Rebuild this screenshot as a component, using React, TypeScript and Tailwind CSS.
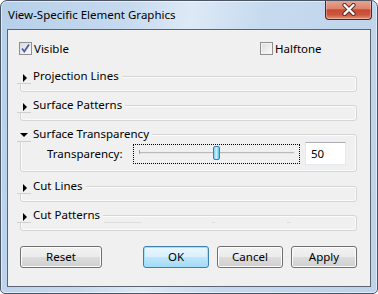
import React from "react";

function Header({ label, open }: { label: string; open?: boolean }) {
  return (
    <div className="absolute top-[-8px] left-[-3px] flex h-[16px] items-stretch bg-[#f0f0f0]">
      <div className="w-[14px] h-[12px] self-end border-b border-[#cfcfcf] flex items-center justify-center">
        {open ? (
          <div className="w-0 h-0 border-x-[4px] border-x-transparent border-t-[4px] border-t-black mt-[-1px]" />
        ) : (
          <div className="w-0 h-0 border-y-[4px] border-y-transparent border-l-[4px] border-l-black ml-[1px]" />
        )}
      </div>
      <span className="pl-[2px] pr-[3px] leading-[16px] text-black">{label}</span>
    </div>
  );
}

function Section({ label, className = "", children, open, boxH = "h-[16px]" }: { label: string; className?: string; children?: React.ReactNode; open?: boolean; boxH?: string }) {
  return (
    <div className={`relative ${className}`}>
      <div className={`${boxH} border border-[#d5d5d5] rounded-[3px] shadow-[inset_0_0_0_1px_#fbfbfb]`}>{children}</div>
      <Header label={label} open={open} />
    </div>
  );
}

function Btn({ label, primary, className = "" }: { label: string; primary?: boolean; className?: string }) {
  return (
    <div
      className={`h-[22px] flex items-center justify-center rounded-[3px] border text-black ${
        primary
          ? "border-[#3c7fb1] bg-[linear-gradient(#eaf6fd_0%,#d9f0fc_50%,#bee6fd_50%,#a7d9f5_100%)] shadow-[inset_0_0_0_1px_#9fe0fb]"
          : "border-[#707070] bg-[linear-gradient(#f2f2f2_0%,#ebebeb_50%,#dddddd_50%,#cfcfcf_100%)] shadow-[inset_0_0_0_1px_#fcfcfc]"
      } ${className}`}
    >
      {label}
    </div>
  );
}

export default function App() {
  return (
    <div className="w-[378px] h-[294px] font-['Noto_Sans',sans-serif] text-[11.5px]">
      <div className="w-[378px] h-[294px] flex flex-col rounded-t-[7px] rounded-b-[5px] border border-[#4b5563] bg-[linear-gradient(100deg,#b6cfe9_0%,#c6daef_30%,#dde9f6_45%,#c6daef_62%,#bcd3ea_100%)] shadow-[inset_0_0_0_1px_rgba(255,255,255,0.55)] overflow-hidden">
        <div className="h-[28px] flex items-start">
          <span className="pl-[7px] pt-[6px] leading-[16px] text-black">View-Specific Element Graphics</span>
          <div className="ml-auto mr-[5px] mt-[-1px] w-[47px] h-[20px] rounded-b-[4px] border border-[#5e2116] border-t-0 bg-[linear-gradient(#e9a694_0%,#dc846c_45%,#c84a33_52%,#cd563e_78%,#e4937a_100%)] shadow-[inset_0_0_0_1px_rgba(255,255,255,0.3)] flex items-center justify-center">
            <svg width="14" height="13" viewBox="0 0 14 13">
              <path d="M2.5 2 L11.5 11 M11.5 2 L2.5 11" stroke="#5a2a24" strokeWidth="4.2" strokeLinecap="round" />
              <path d="M2.5 2 L11.5 11 M11.5 2 L2.5 11" stroke="#ffffff" strokeWidth="2.4" strokeLinecap="round" />
            </svg>
          </div>
        </div>
        <div className="flex-1 mx-[6px] mb-[6px] border border-[#5b6470] bg-[#f0f0f0] flex flex-col">
          <div className="mt-[12px] h-[13px] flex items-center pl-[11px]">
            <div className="w-[241px] flex items-center">
              <div className="w-[13px] h-[13px] border border-[#8e8f8f] bg-[linear-gradient(135deg,#dcdcdc,#fafafa)] flex items-center justify-center">
                <svg width="11" height="11" viewBox="0 0 11 11">
                  <path d="M2 5.5 L4.3 8.5 L9 1.5" stroke="#4c61a0" strokeWidth="1.8" fill="none" />
                </svg>
              </div>
              <span className="ml-[2px] leading-[16px]">Visible</span>
            </div>
            <div className="flex items-center">
              <div className="w-[13px] h-[13px] border border-[#8e8f8f] bg-[linear-gradient(135deg,#dcdcdc,#fafafa)] shadow-[inset_0_0_0_1px_#f4f4f4]" />
              <span className="ml-[2px] leading-[16px]">Halftone</span>
            </div>
          </div>
          <div className="pl-[12px] pr-[13px] flex flex-col">
            <Section label="Projection Lines" className="mt-[21px]" />
            <Section label="Surface Patterns" className="mt-[13px]" />
            <Section label="Surface Transparency" className="mt-[13px]" open boxH="h-[38px]">
              <div className="pl-[26px] pt-[7px] flex items-center">
                <span className="w-[86px] leading-[16px]">Transparency:</span>
                <div className="relative w-[167px] h-[20px] border border-dotted border-black">
                  <div className="absolute left-[5px] right-[5px] top-[7px] h-[2px] bg-[#b9b9b9] border-b border-[#e6e6e6]" />
                  <div className="absolute left-[5px] top-[5px] w-[1px] h-[4px] bg-[#a0a0a0]" />
                  <div className="absolute left-[79px] top-[1px] w-[7px] h-[14px] rounded-[2px] border border-[#3c7fb1] bg-[linear-gradient(90deg,#7fd3f5,#c6effd_50%,#5cc3ee)]" />
                </div>
                <div className="ml-[5px] w-[41px] h-[23px] border border-[#e3e9ef] border-t-[#abadb3] bg-white flex items-center pl-[5px]">
                  <span className="leading-[16px]">50</span>
                </div>
              </div>
            </Section>
            <Section label="Cut Lines" className="mt-[14px]" />
            <Section label="Cut Patterns" className="mt-[13px]">
              <div className="relative h-full">
                <div className="absolute left-[83px] top-[6px] w-[38px] h-[1px] bg-[#dcdcdc]" />
                <div className="absolute left-[191px] top-[6px] w-[3px] h-[1px] bg-[#dcdcdc]" />
                <div className="absolute left-[266px] top-[6px] w-[3px] h-[1px] bg-[#dcdcdc]" />
              </div>
            </Section>
            <div className="mt-[15px] flex">
              <Btn label="Reset" className="w-[82px]" />
              <Btn label="OK" primary className="w-[66px] ml-auto" />
              <Btn label="Cancel" className="w-[66px] ml-[8px]" />
              <Btn label="Apply" className="w-[66px] ml-[8px]" />
            </div>
          </div>
        </div>
      </div>
    </div>
  );
}
